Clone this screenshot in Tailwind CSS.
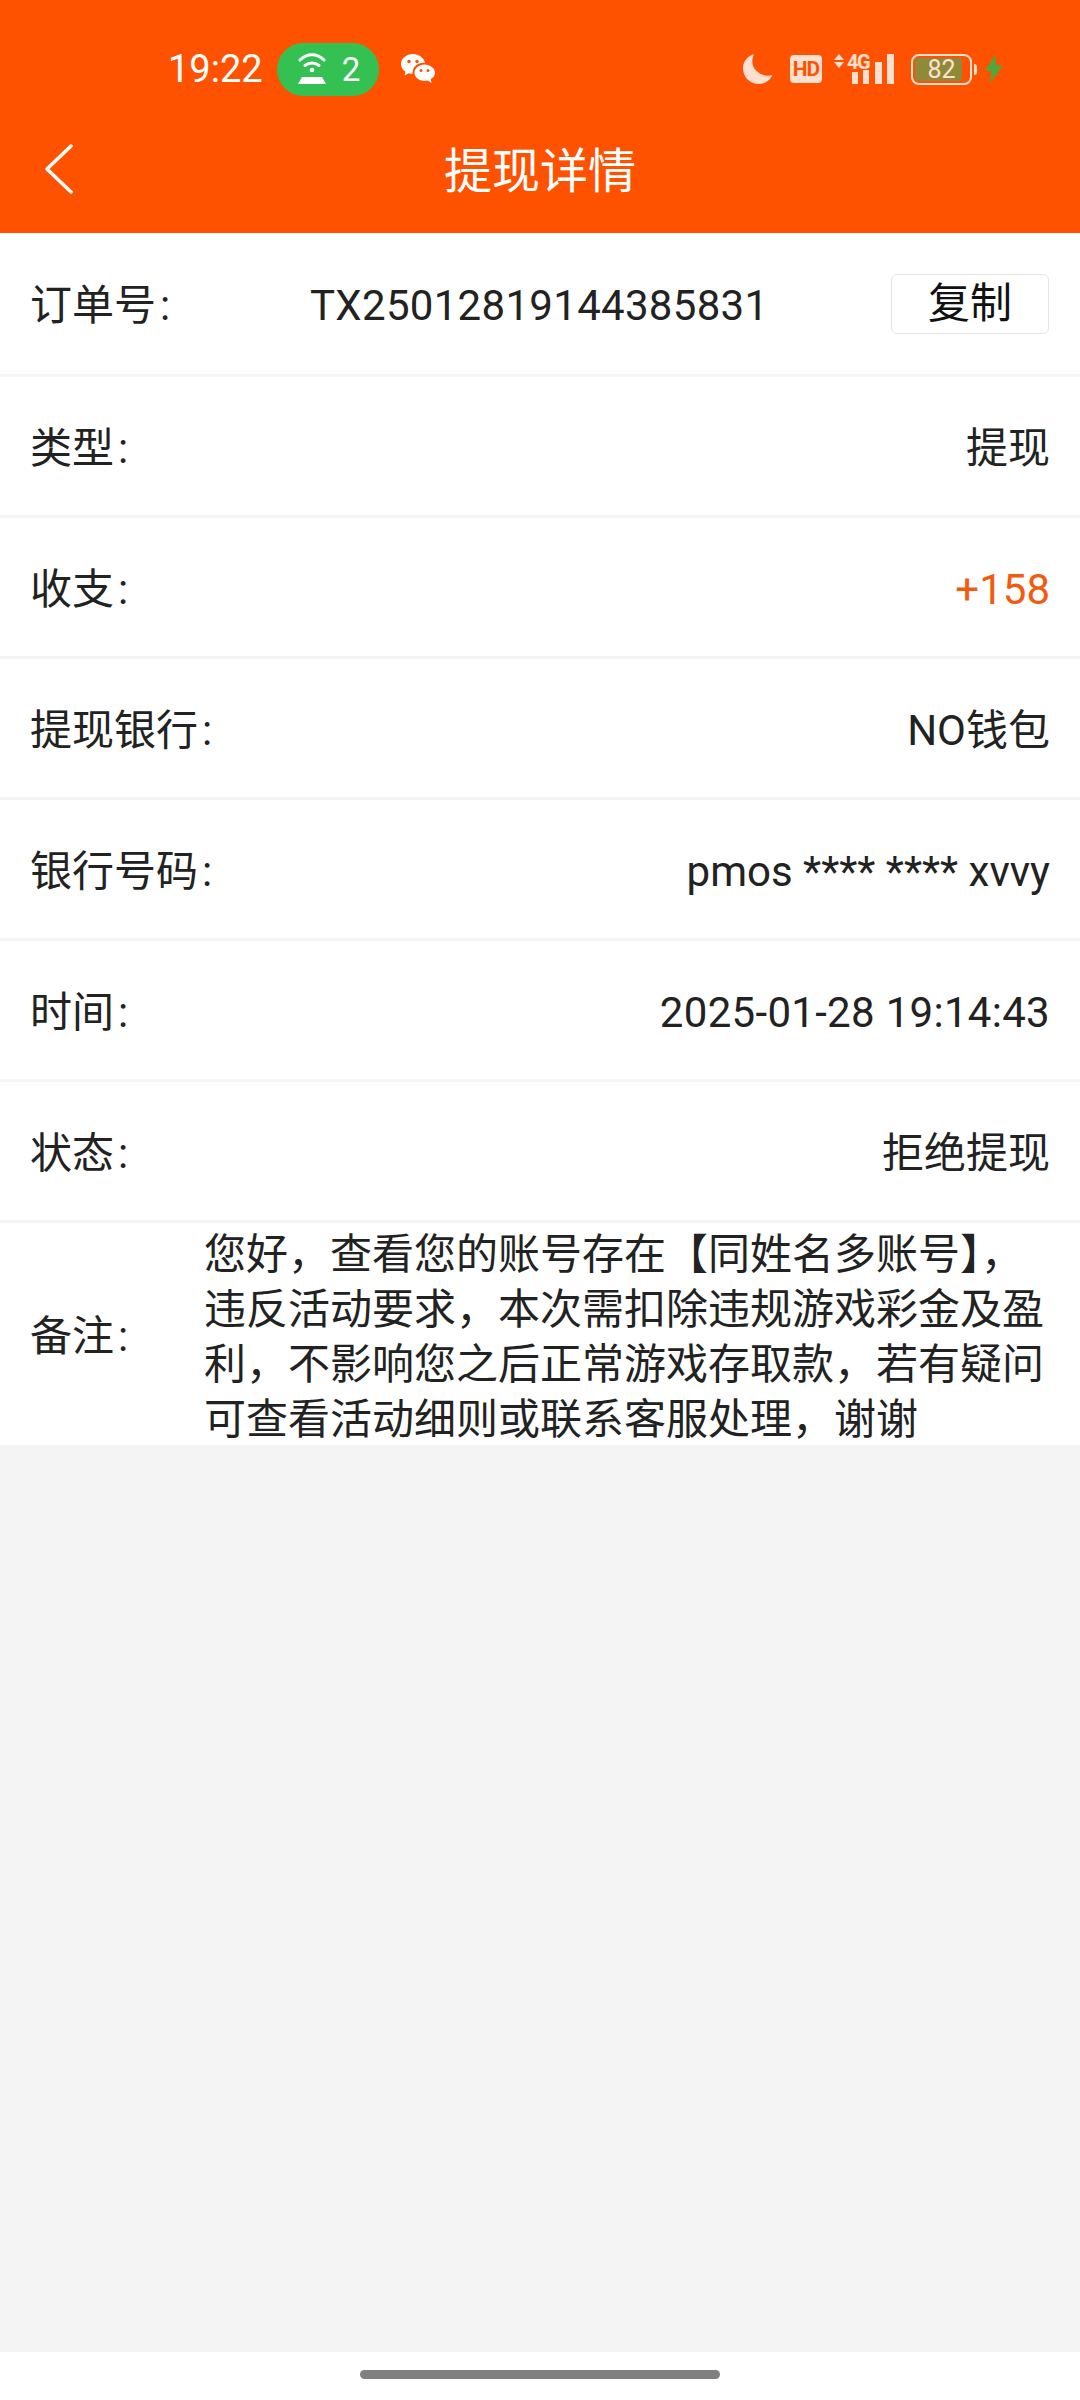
<!DOCTYPE html>
<html lang="zh-CN">
<head>
    <meta charset="UTF-8">
    <meta name="viewport" content="width=device-width, initial-scale=1.0">
    <title>提现详情</title>
    <script src="https://cdn.jsdelivr.net/npm/@tailwindcss/browser@4"></script>
</head>
<body class="w-[1080px] h-[2400px] flex flex-col bg-[#f4f4f4] text-[#222] font-['Roboto','Noto_Sans_CJK_SC',sans-serif] overflow-hidden">

    <!-- status bar + title -->
    <header class="h-[233px] shrink-0 bg-[#ff5200] text-white flex flex-col">
        <div class="h-[70px] mt-[34px] flex items-center pl-[168px] pr-[77px]">
            <span class="text-[38px] leading-none w-[96px]">19:22</span>
            <span class="ml-[13px] w-[102px] h-[53px] rounded-full bg-[#34c152] flex items-center justify-center gap-[14px]">
                <svg width="32" height="32" viewBox="0 0 32 32" fill="none" stroke="#fff" stroke-width="3" stroke-linecap="round">
                    <path d="M4 7C11 0 21 0 28 7"/>
                    <path d="M9 12.500C13 9 19 9 23 12.500"/>
                    <circle cx="16" cy="17" r="2.300" fill="#fff" stroke="none"/>
                    <path d="M6 24H26L30 31H2Z" fill="#fff" stroke="none"/>
                </svg>
                <span class="text-[33px] leading-none">2</span>
            </span>
            <svg class="ml-[22px]" width="34" height="30" viewBox="0 0 34 30" fill="#fff">
                <path d="M12 0C5.400 0 0 4.400 0 10C0 13.200 1.700 15.800 4.500 17.700L3.500 21.500L7.800 19.200C9 19.600 10.300 19.800 11.600 19.800C11 12.500 17.500 8 24 8.800C22.800 3.700 17.800 0 12 0Z"/>
                <path d="M23.500 10.500C18 10.500 13.500 14.200 13.500 18.800C13.500 23.400 18 27 23.500 27C24.600 27 25.700 26.800 26.700 26.500L30.500 29L29.700 25.300C32.300 23.800 34 21.400 34 18.800C34 14.200 29 10.500 23.500 10.500Z"/>
                <circle cx="8" cy="7.500" r="1.700" fill="#ff5200"/>
                <circle cx="16" cy="7.500" r="1.700" fill="#ff5200"/>
                <circle cx="20" cy="16.500" r="1.500" fill="#ff5200"/>
                <circle cx="27" cy="16.500" r="1.500" fill="#ff5200"/>
            </svg>
            <div class="ml-auto flex items-center text-[#ffe0d0]">
                <svg width="30" height="30" viewBox="0 0 30 30" fill="currentColor">
                    <path d="M11 0C4.500 2 0 7.500 0 14.500C0 23 7 30 15.500 30C21.800 30 27 26.500 29.500 21C21.500 23.500 12 18.500 9.800 11C8.800 7.500 9.500 3.500 11 0Z"/>
                </svg>
                <span class="ml-[17px] w-[32px] h-[28px] rounded-[4px] bg-current flex items-center justify-center">
                    <span class="text-[#ff5200] text-[21px] font-bold leading-none tracking-[-1px]">HD</span>
                </span>
                <div class="ml-[12px] relative w-[60px] h-[30px]">
                    <svg class="absolute left-0 top-0" width="60" height="30" viewBox="0 0 60 30" fill="currentColor">
                        <path d="M0 6L5 0L10 6Z"/>
                        <path d="M0 8H10L5 14Z"/>
                        <rect x="18" y="18" width="6" height="12"/>
                        <rect x="29" y="16" width="6" height="14"/>
                        <rect x="41" y="8" width="7" height="22"/>
                        <rect x="53" y="0" width="7" height="30"/>
                    </svg>
                    <span class="absolute left-[13px] top-[-2px] text-[20px] font-bold leading-none tracking-[-1.500px]">4G</span>
                </div>
                <div class="ml-[17px] w-[61px] h-[31px] rounded-[8px] border-[2px] border-current p-[2px] relative">
                    <div class="h-full w-[47px] rounded-[3px] bg-[#8f8a3a]"></div>
                    <span class="absolute inset-0 flex items-center justify-center text-[25px] leading-none">82</span>
                </div>
                <span class="ml-[2px] w-[3px] h-[11px] rounded-r-full bg-current"></span>
                <svg class="ml-[8px]" width="18" height="30" viewBox="0 0 19 30" fill="#4fa83a">
                    <path d="M11 0L0 17H7L5 30L19 11H11.500Z"/>
                </svg>
            </div>
        </div>
        <div class="relative flex-1 flex items-center justify-center pt-[7px]">
            <svg class="absolute left-[44px] top-[40px]" width="30" height="50" viewBox="0 0 30 50" fill="none" stroke="#fff" stroke-width="3.500" stroke-linecap="round" stroke-linejoin="round">
                <path d="M27 2L3 25L27 48"/>
            </svg>
            <h1 class="text-[48px] leading-none">提现详情</h1>
        </div>
    </header>

    <main class="bg-white text-[42px] leading-[55px]">
        <div class="h-[144px] pl-[30px] pr-[31px] pt-[4px] flex items-center border-b-[3px] border-[#f4f4f4]">
            <span class="w-[280px] shrink-0">订单号<span class="ml-[4px]">:</span></span>
            <span class="flex-1 tracking-[0.3px]">TX25012819144385831</span>
            <button class="w-[158px] h-[60px] mb-[3px] rounded-[6px] border border-[#e5e5e5] text-[42px] text-[#111] leading-none">复制</button>
        </div>
        <div class="h-[141px] px-[30px] pt-[4px] flex items-center justify-between border-b-[3px] border-[#f4f4f4]">
            <span>类型<span class="ml-[4px]">:</span></span>
            <span>提现</span>
        </div>
        <div class="h-[141px] px-[30px] pt-[4px] flex items-center justify-between border-b-[3px] border-[#f4f4f4]">
            <span>收支<span class="ml-[4px]">:</span></span>
            <span class="text-[#f25a0e]">+158</span>
        </div>
        <div class="h-[141px] px-[30px] pt-[4px] flex items-center justify-between border-b-[3px] border-[#f4f4f4]">
            <span>提现银行<span class="ml-[4px]">:</span></span>
            <span>NO钱包</span>
        </div>
        <div class="h-[141px] px-[30px] pt-[4px] flex items-center justify-between border-b-[3px] border-[#f4f4f4]">
            <span>银行号码<span class="ml-[4px]">:</span></span>
            <span>pmos **** **** xvvy</span>
        </div>
        <div class="h-[141px] px-[30px] pt-[4px] flex items-center justify-between border-b-[3px] border-[#f4f4f4]">
            <span>时间<span class="ml-[4px]">:</span></span>
            <span class="tracking-[0.3px]">2025-01-28 19:14:43</span>
        </div>
        <div class="h-[141px] px-[30px] pt-[4px] flex items-center justify-between border-b-[3px] border-[#f4f4f4]">
            <span>状态<span class="ml-[4px]">:</span></span>
            <span>拒绝提现</span>
        </div>
        <div class="h-[222px] px-[30px] pt-[5px] flex items-center">
            <span class="w-[174px] shrink-0">备注<span class="ml-[4px]">:</span></span>
            <p class="flex-1">您好&#xFF0C;查看您的账号存在【同姓名多账号】&#xFF0C;违反活动要求&#xFF0C;本次需扣除违规游戏彩金及盈利&#xFF0C;不影响您之后正常游戏存取款&#xFF0C;若有疑问可查看活动细则或联系客服处理&#xFF0C;谢谢</p>
        </div>
    </main>

    <div class="flex-1"></div>

    <!-- gesture bar -->
    <div class="h-[48px] shrink-0 bg-white flex justify-center pt-[18px]">
        <div class="w-[360px] h-[9px] rounded-full bg-[#808080]"></div>
    </div>
</body>
</html>
